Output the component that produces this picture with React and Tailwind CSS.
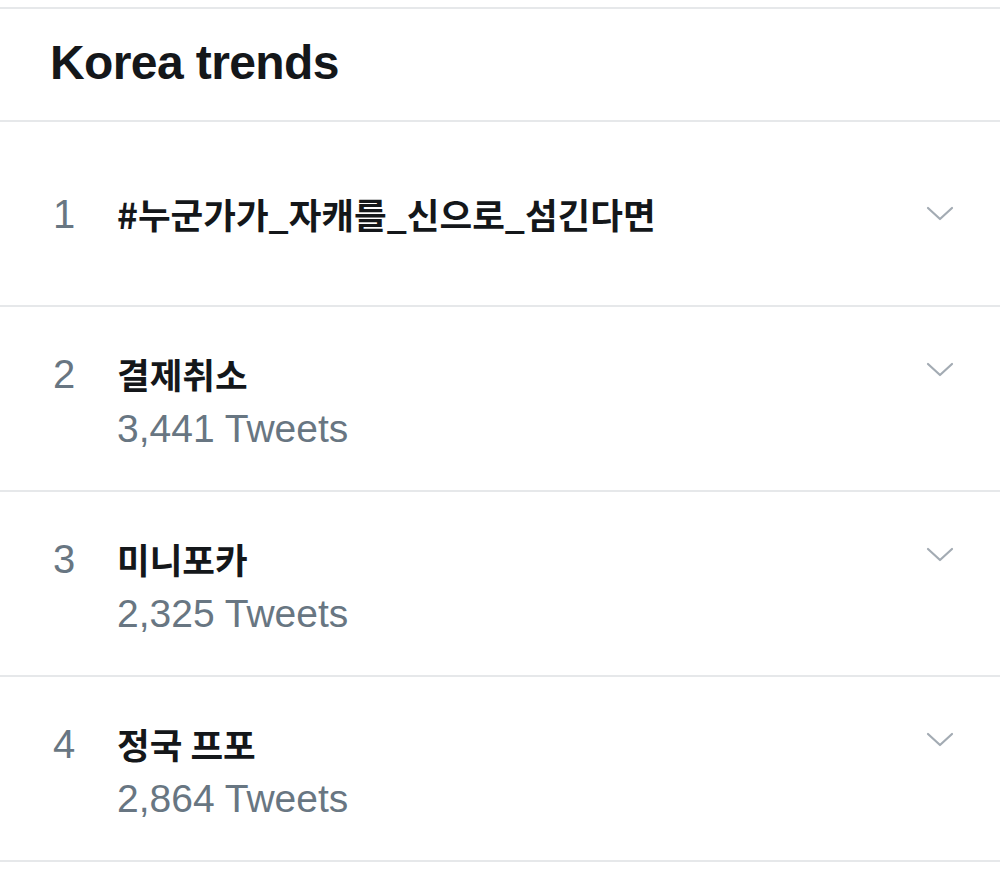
import React from "react";

const trends = [
  { rank: 1, title: "#누군가가_자캐를_신으로_섬긴다면" },
  { rank: 2, title: "결제취소", count: "3,441 Tweets" },
  { rank: 3, title: "미니포카", count: "2,325 Tweets" },
  { rank: 4, title: "정국 프포", count: "2,864 Tweets" },
];

const Chevron = () => (
  <svg width="28" height="15" viewBox="0 0 28 15" fill="none">
    <path
      d="M2 2 L14 13 L26 2"
      stroke="#a3abb3"
      strokeWidth="2.2"
      strokeLinecap="round"
      strokeLinejoin="round"
    />
  </svg>
);

export default function App() {
  return (
    <div
      className="w-[1000px] h-[880px] bg-white overflow-hidden pt-[7px]"
      style={{ fontFamily: '"Liberation Sans", "Noto Sans CJK KR", sans-serif' }}
    >
      {/* Header */}
      <div className="h-[115px] border-t-2 border-b-2 border-[#e6e8ea] flex items-center pl-[50px]">
        <h1 className="text-[48px] font-bold text-[#14171a] tracking-[-0.6px] leading-none pb-[4px]">
          Korea trends
        </h1>
      </div>

      {/* Trend rows */}
      {trends.map((t) => (
        <div
          key={t.rank}
          className="h-[185px] border-b-2 border-[#e6e8ea] flex items-center pl-[53px] pr-[46px]"
        >
          <div className="flex-1 flex flex-col">
            <div className="flex items-center h-[50px]">
              <span className="w-[64px] text-[40px] text-[#687682] leading-none">
                {t.rank}
              </span>
              <span
                className="text-[35.5px] font-semibold text-[#14171a] leading-none"
                style={{ fontFamily: '"Noto Sans CJK KR", sans-serif' }}
              >
                {t.title}
              </span>
            </div>
            {t.count && (
              <div className="pl-[64px] mt-[10px] text-[39px] text-[#687682] leading-none">
                {t.count}
              </div>
            )}
          </div>
          <div className={t.count ? "self-start mt-[55px]" : ""}>
            <Chevron />
          </div>
        </div>
      ))}
    </div>
  );
}
